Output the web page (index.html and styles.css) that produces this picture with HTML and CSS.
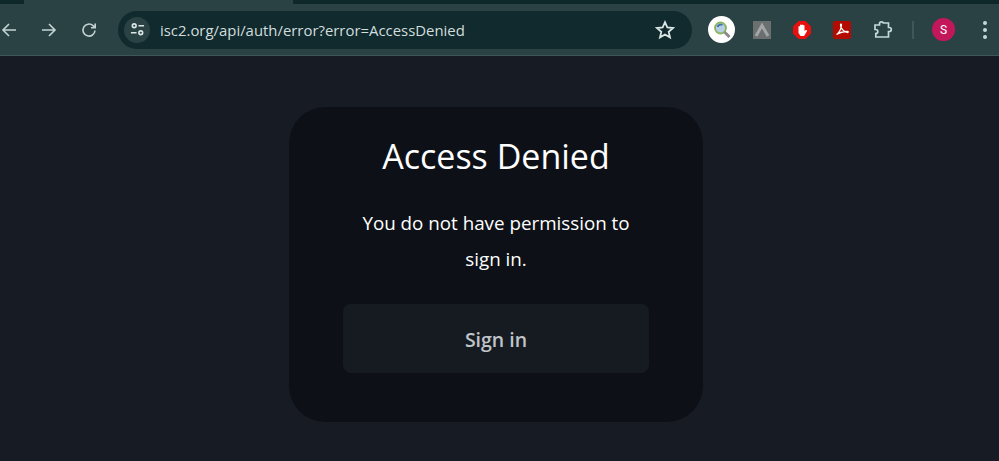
FILE: index.html
```html
<!DOCTYPE html>
<html lang="en">
<head>
    <meta charset="UTF-8">
    <title>Access Denied</title>
    <link rel="stylesheet" href="styles.css">
</head>
<body>
<!-- Browser chrome -->
<div class="tabstrip"><div class="active-tab"></div></div>
<div class="toolbar">
    <svg class="nav-icon nav-back" viewBox="0 0 16 16"><path d="M15 8H2M8 2L2 8l6 6"/></svg>
    <svg class="nav-icon nav-forward" viewBox="0 0 16 16"><path d="M1 8h13M8 2l6 6-6 6"/></svg>
    <svg class="nav-icon nav-reload" viewBox="0 0 16 16"><path d="M14 8.5A6 6 0 1 1 12 3.6L14 5.5M14.2 1.5v4.2h-4.2"/></svg>

    <div class="omnibox">
        <span class="site-info">
            <svg viewBox="0 0 16 16"><circle cx="4.5" cy="4" r="2"/><path d="M9 4h6M1 11.5h6"/><circle cx="11.5" cy="11.5" r="2"/></svg>
        </span>
        <span class="url">isc2.org/api/auth/error?error=AccessDenied</span>
        <svg class="star" viewBox="0 0 18 18"><path d="M9 2l2.1 4.7 5.1.5-3.9 3.4 1.2 5L9 13l-4.5 2.6 1.2-5-3.9-3.4 5.1-.5z"/></svg>
    </div>

    <div class="ext ext-lens">
        <svg viewBox="0 0 20 20"><circle cx="8.5" cy="8" r="5.5" fill="#b5cfe6" stroke="#8cb35f" stroke-width="1.8"/><path d="M5.500 7a3.500 3.500 0 0 1 5-2" fill="none" stroke="#3f72b0" stroke-width="1.800"/><path d="M12.500 12l5 5" stroke="#8a8b8d" stroke-width="3"/></svg>
    </div>
    <svg class="ext ext-gray" viewBox="0 0 18 18"><rect width="18" height="18" fill="#6b6f70"/><path d="M3 15L9 4.500 15 15" fill="none" stroke="#a3a6a6" stroke-width="3"/></svg>
    <svg class="ext ext-hand" viewBox="0 0 18 18"><path d="M5.500 0h7L18 5.500v7L12.500 18h-7L0 12.500v-7z" fill="#e8100f"/><path d="M5.500 9V5.500a.8.8 0 0 1 1.500 0V4a.8.8 0 0 1 1.500 0 .8.8 0 0 1 1.500 0V4.500a.8.8 0 0 1 1.500 0V10l1.300-1a.9.9 0 0 1 1.200 1.200L11 15H7.500L5.500 12z" fill="#fff"/></svg>
    <svg class="ext ext-pdf" viewBox="0 0 18 18"><rect width="18" height="18" rx="2" fill="#b30b00"/><path d="M3.500 13.500C6 12 8.500 7.500 8.500 4c0-1-1-1-1 0 0 3 3 7 7 7.500 1 0 1-1 0-1-3 0-8 1-11 3z" fill="none" stroke="#fff" stroke-width="1.300"/></svg>
    <svg class="ext ext-puzzle" viewBox="0 0 20 20"><path d="M2 5h4.500V3.800a2 2 0 0 1 4 0V3h5v4.500h.8a2 2 0 0 1 0 4h-.8V17H2.800v-3.500a2 2 0 0 0 0-4H2z"/></svg>
    <span class="divider"></span>
    <span class="avatar">S</span>
    <span class="menu-dots"><i></i><i></i><i></i></span>
</div>

<!-- Page -->
<main class="page">
    <div class="card">
        <h1>Access Denied</h1>
        <p>You do not have permission to sign in.</p>
        <button class="signin">Sign in</button>
    </div>
</main>
</body>
</html>
```

FILE: styles.css
```css
html, body {
    height: 100%;
    margin: 0;
    overflow: hidden;
}

body {
    display: flex;
    flex-direction: column;
    background-color: #171c24;
    font-family: "Open Sans", "Noto Sans", sans-serif;
}

/* Browser chrome */
.tabstrip {
    height: 4px;
    padding-left: 24px;
    background-color: #0e2729;
}

.active-tab {
    width: 269px;
    height: 4px;
    background-color: #2a4244;
}

.toolbar {
    display: flex;
    align-items: center;
    height: 52px;
    box-sizing: border-box;
    background-color: #2a4244;
    border-bottom: 1px solid #3f5557;
}

.nav-icon {
    width: 16px;
    height: 16px;
    fill: none;
    stroke: #c3d3d4;
    stroke-width: 1.6;
    flex-shrink: 0;
}

.nav-back {
    margin-left: 1px;
}

.nav-forward {
    margin-left: 24px;
}

.nav-reload {
    margin-left: 24px;
}

.omnibox {
    display: flex;
    align-items: center;
    width: 574px;
    height: 38px;
    margin-left: 21px;
    background-color: #102a2d;
    border-radius: 19px;
}

.site-info {
    display: flex;
    align-items: center;
    justify-content: center;
    width: 26px;
    height: 26px;
    margin-left: 6px;
    border-radius: 50%;
    background-color: #2a4244;
}

.site-info svg {
    width: 15px;
    height: 15px;
    fill: none;
    stroke: #dbe6e6;
    stroke-width: 1.7;
}

.url {
    margin-left: 10px;
    font-size: 14.9px;
    color: #d2dddd;
    white-space: nowrap;
}

.star {
    width: 20px;
    height: 20px;
    margin-left: auto;
    margin-right: 17px;
    fill: none;
    stroke: #dbe6e6;
    stroke-width: 1.6;
}

.ext {
    flex-shrink: 0;
}

.ext-lens {
    display: flex;
    align-items: center;
    justify-content: center;
    width: 27px;
    height: 27px;
    margin-left: 16px;
    border-radius: 50%;
    background-color: #fff;
}

.ext-lens svg {
    width: 20px;
    height: 20px;
}

.ext-gray {
    width: 18px;
    height: 18px;
    margin-left: 18px;
}

.ext-hand {
    width: 18px;
    height: 18px;
    margin-left: 22px;
}

.ext-pdf {
    width: 18px;
    height: 18px;
    margin-left: 22px;
}

.ext-puzzle {
    width: 20px;
    height: 20px;
    margin-left: 22px;
    fill: none;
    stroke: #c3d8da;
    stroke-width: 1.7;
}

.divider {
    width: 2px;
    height: 18px;
    margin-left: 19px;
    background-color: #3f5759;
}

.avatar {
    display: flex;
    align-items: center;
    justify-content: center;
    width: 23px;
    height: 23px;
    margin-left: 18px;
    border-radius: 50%;
    background-color: #c2185b;
    color: #fff;
    font-family: "Roboto", sans-serif;
    font-size: 12px;
}

.menu-dots {
    display: flex;
    flex-direction: column;
    gap: 3px;
    margin-left: 28px;
}

.menu-dots i {
    width: 4px;
    height: 4px;
    border-radius: 50%;
    background-color: #c3d8da;
}

/* Page */
.page {
    flex: 1;
    display: flex;
    justify-content: center;
    align-items: flex-start;
    padding: 51px 7px 0 0;
}

.card {
    display: flex;
    flex-direction: column;
    align-items: center;
    box-sizing: border-box;
    width: 414px;
    height: 315px;
    padding-top: 24px;
    background-color: #0d1117;
    border-radius: 36px;
    text-align: center;
}

h1 {
    margin: 0;
    font-size: 34px;
    font-weight: 400;
    line-height: 50px;
    color: #fff;
}

p {
    width: 306px;
    margin: 24px 0 0;
    font-size: 18.8px;
    line-height: 36px;
    color: #fff;
}

.signin {
    width: 306px;
    height: 69px;
    margin-top: 27px;
    padding-top: 2px;
    border: none;
    border-radius: 8px;
    background-color: #161b22;
    color: #c0c4c9;
    font-family: inherit;
    font-size: 19.5px;
    font-weight: 600;
}
```
